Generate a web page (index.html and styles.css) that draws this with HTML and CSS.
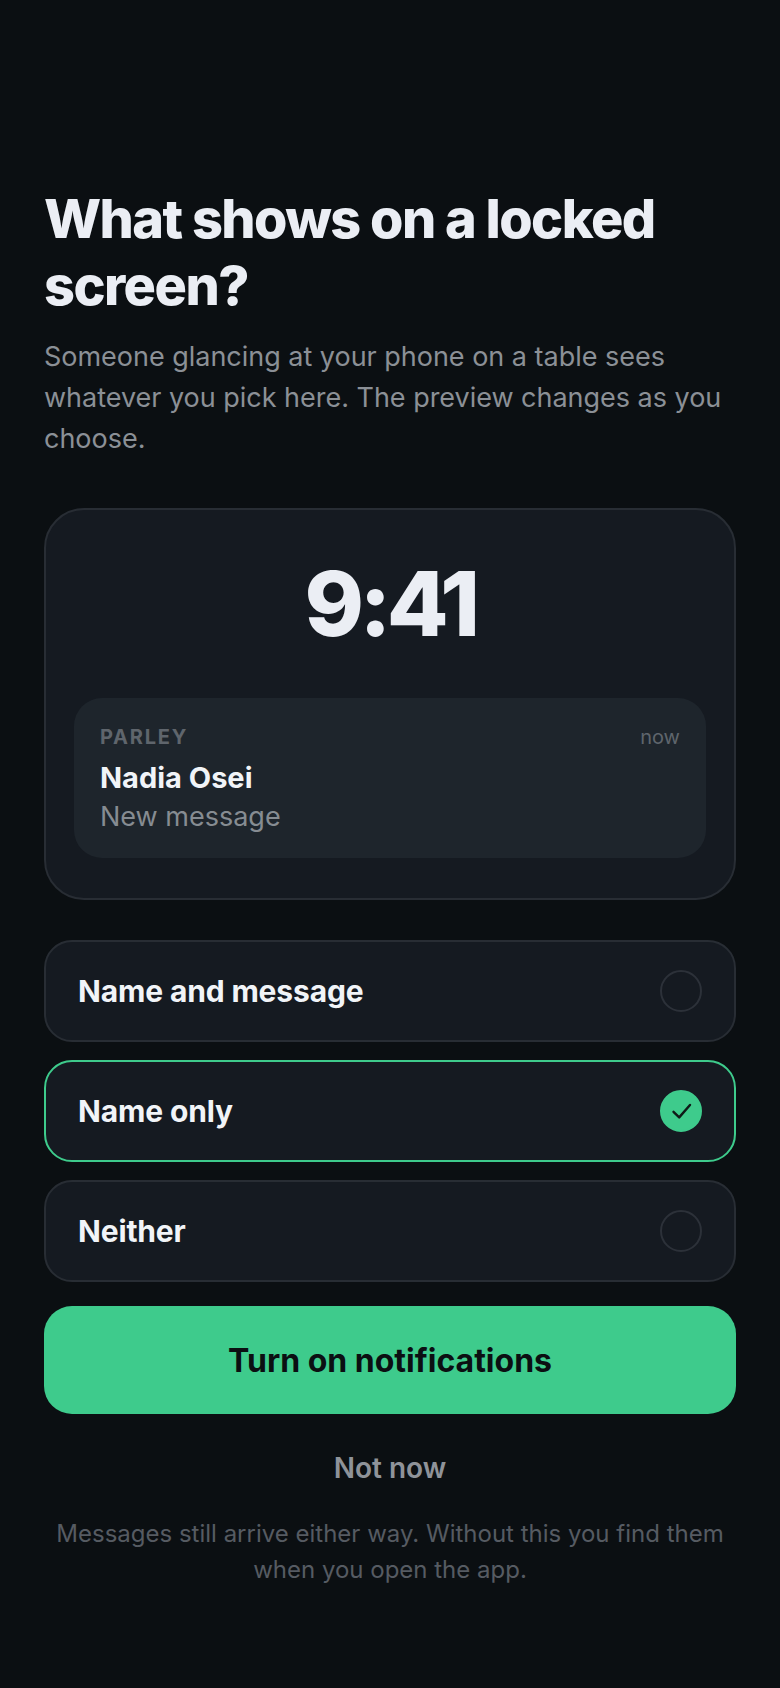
FILE: index.html
```html
<!DOCTYPE html>
<html lang="en">
<head>
  <meta charset="UTF-8" />
  <meta name="viewport" content="width=device-width, initial-scale=1.0" />
  <title>Lock screen preview</title>
  <link rel="stylesheet" href="styles.css">
</head>
<body>
  <main class="screen">
    <h1>What shows on a locked screen?</h1>
    <p class="lead">Someone glancing at your phone on a table sees whatever you pick here. The preview changes as you choose.</p>

    <section class="preview">
      <div class="clock">9:41</div>
      <div class="notice">
        <div class="notice-top">
          <span class="notice-app">PARLEY</span>
          <span class="notice-time">now</span>
        </div>
        <div class="notice-name">Nadia Osei</div>
        <div class="notice-body">New message</div>
      </div>
    </section>

    <div class="options">
      <div class="option">
        <span>Name and message</span>
        <span class="radio"></span>
      </div>
      <div class="option selected">
        <span>Name only</span>
        <span class="radio">
          <svg width="24" height="24" viewBox="0 0 24 24" fill="none" stroke="#0f1a17" stroke-width="2.4" stroke-linecap="round" stroke-linejoin="round">
            <path d="M4.5 12.8l5.7 5.6L21 6" />
          </svg>
        </span>
      </div>
      <div class="option">
        <span>Neither</span>
        <span class="radio"></span>
      </div>
    </div>

    <button class="primary">Turn on notifications</button>
    <button class="secondary">Not now</button>
    <p class="footnote">Messages still arrive either way. Without this you find them when you open the app.</p>
  </main>
</body>
</html>
```

FILE: styles.css
```css
* {
  margin: 0;
  padding: 0;
  box-sizing: border-box;
}

body {
  font-family: Inter, "Noto Sans", sans-serif;
  background: #0b0f12;
  color: #ebeef4;
  min-height: 100vh;
}

.screen {
  display: flex;
  flex-direction: column;
  padding: 185px 44px 0;
}

h1 {
  font-size: 54px;
  line-height: 67px;
  font-weight: 800;
  letter-spacing: -1.55px;
  color: #ebeef4;
}

.lead {
  margin-top: 17px;
  font-size: 27px;
  line-height: 41px;
  letter-spacing: -0.02px;
  color: #8b9096;
}

.preview {
  margin-top: 49px;
  height: 392px;
  padding: 0 28px;
  background: #151a21;
  border: 2px solid #282d34;
  border-radius: 40px;
}

.clock {
  margin-top: 48px;
  text-align: center;
  font-size: 90px;
  line-height: 92px;
  font-weight: 800;
  letter-spacing: -4.5px;
  color: #ebeef4;
}

.notice {
  margin-top: 48px;
  height: 160px;
  padding: 25px 26px;
  background: #1e252c;
  border-radius: 28px;
}

.notice-top {
  display: flex;
  justify-content: space-between;
  align-items: center;
  line-height: 28px;
}

.notice-app {
  font-size: 20px;
  font-weight: 700;
  letter-spacing: 1.8px;
  color: #5f656c;
}

.notice-time {
  font-size: 20px;
  color: #5f656c;
}

.notice-name {
  margin-top: 8px;
  font-size: 29px;
  line-height: 38px;
  font-weight: 700;
  color: #f1f4f8;
}

.notice-body {
  margin-top: 1px;
  font-size: 27px;
  line-height: 38px;
  color: #868c92;
}

.options {
  margin-top: 40px;
  display: flex;
  flex-direction: column;
  gap: 18px;
}

.option {
  display: flex;
  justify-content: space-between;
  align-items: center;
  height: 102px;
  padding: 0 32px;
  background: #151a21;
  border: 2px solid #282d34;
  border-radius: 28px;
  font-size: 30px;
  font-weight: 700;
  letter-spacing: -0.15px;
  color: #f1f4f8;
}

.option.selected {
  border-color: #3ecb8c;
}

.radio {
  display: flex;
  align-items: center;
  justify-content: center;
  width: 42px;
  height: 42px;
  border: 2px solid #2c3139;
  border-radius: 50%;
}

.selected .radio {
  background: #3ecb8c;
  border-color: #3ecb8c;
}

.primary {
  margin-top: 24px;
  height: 108px;
  border: none;
  border-radius: 28px;
  background: #3ecb8c;
  color: #0b0f12;
  font-family: inherit;
  font-size: 32px;
  font-weight: 700;
}

.secondary {
  margin-top: 30px;
  height: 48px;
  border: none;
  background: none;
  color: #8f9399;
  font-family: inherit;
  font-size: 28px;
  font-weight: 600;
}

.footnote {
  margin-top: 24px;
  padding: 0 8px;
  text-align: center;
  font-size: 24px;
  line-height: 36px;
  color: #565b62;
}
```
